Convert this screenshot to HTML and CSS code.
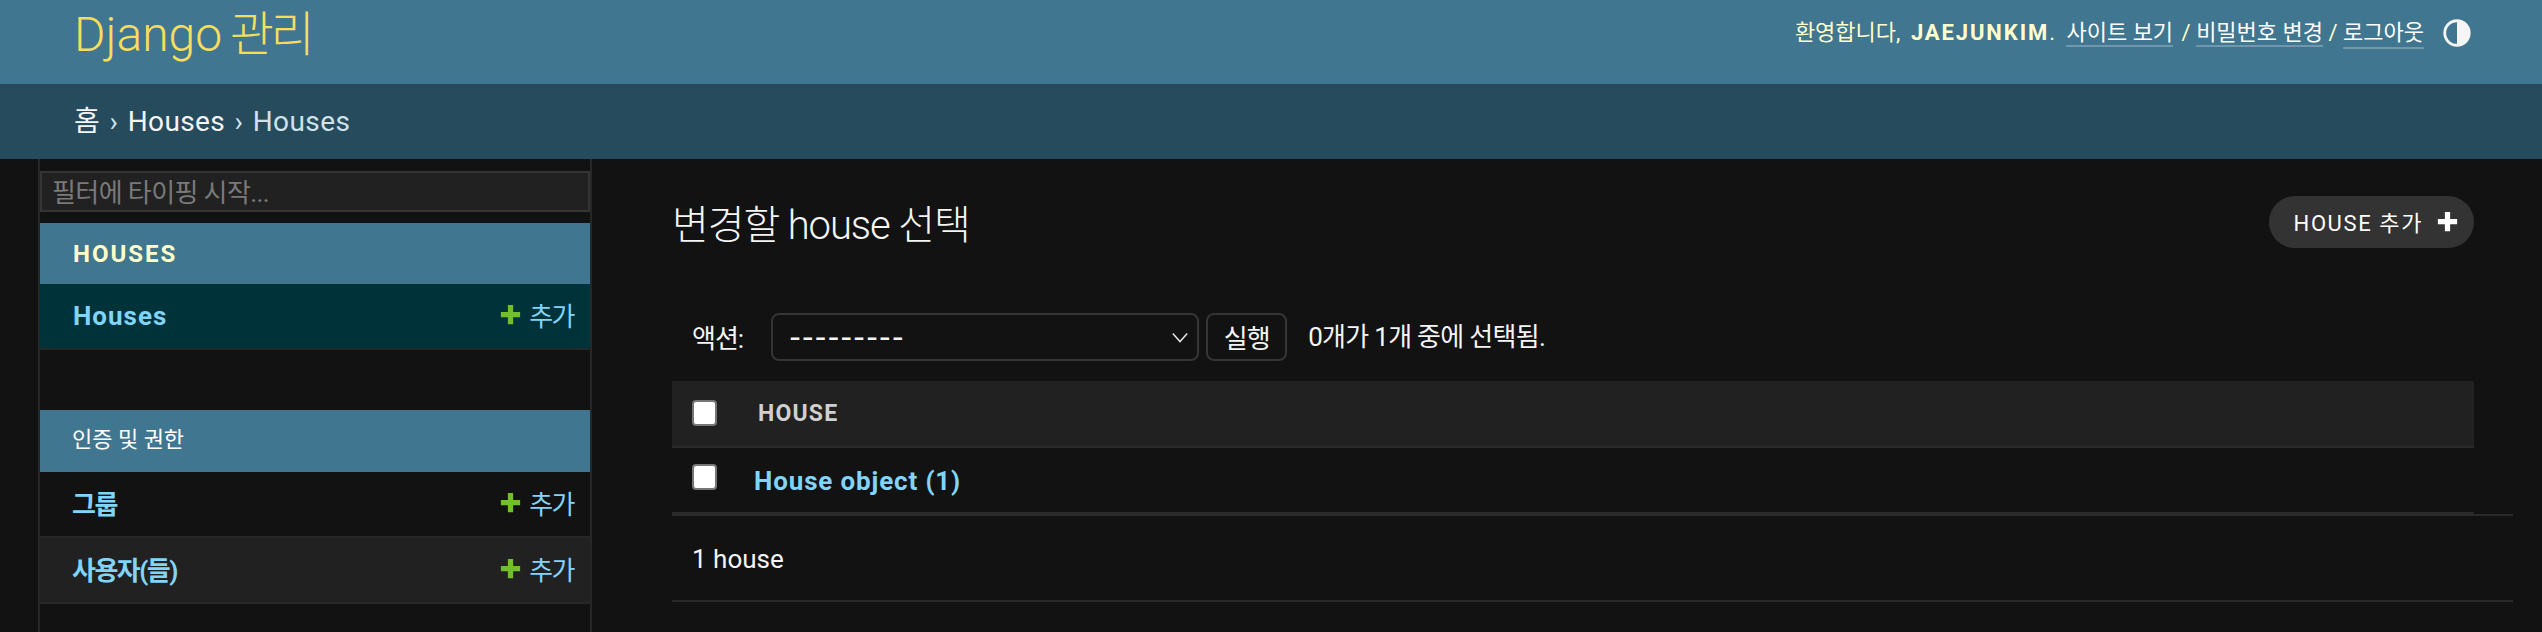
FILE: index.html
```html
<!DOCTYPE html>
<html lang="ko">
<head>
  <meta charset="UTF-8">
  <meta name="viewport" content="width=device-width, initial-scale=1.0">
  <title>변경할 house 선택 | Django 사이트 관리</title>
  <link rel="stylesheet" href="styles.css">
</head>
<body>
<header class="header">
  <div class="branding"><a href="#">Django <span class="branding-ko">관리</span></a></div>
  <div class="user-tools">
    <div class="user-links">환영합니다, <strong>JAEJUNKIM</strong>. <a class="view-site" href="#">사이트 보기</a> / <a href="#">비밀번호 변경</a> / <a class="logout" href="#">로그아웃</a></div>
    <svg class="theme-icon" viewBox="0 0 24 24" aria-hidden="true">
      <circle cx="12" cy="12" r="10.5" fill="none" stroke="#f5f5f5" stroke-width="2.4"/>
      <path d="M12 2a10 10 0 0 1 0 20z" fill="#f5f5f5"/>
    </svg>
  </div>
</header>
<div class="breadcrumbs"><a href="#">홈</a> › <a href="#">Houses</a> › Houses</div>

<div class="layout">
  <nav class="sidebar">
    <input class="nav-filter" type="search" placeholder="필터에 타이핑 시작...">

    <div class="app-caption app-caption-bold">HOUSES</div>
    <div class="model-row model-row-current">
      <a class="model-name model-name-latin" href="#">Houses</a>
      <a class="addlink" href="#"><svg viewBox="0 0 24 24"><path d="M9 1h6v8h8v6h-8v8H9v-8H1V9h8z"/></svg>추가</a>
    </div>

    <div class="app-caption">인증 및 권한</div>
    <div class="model-row">
      <a class="model-name" href="#">그룹</a>
      <a class="addlink" href="#"><svg viewBox="0 0 24 24"><path d="M9 1h6v8h8v6h-8v8H9v-8H1V9h8z"/></svg>추가</a>
    </div>
    <div class="model-row model-row-alt">
      <a class="model-name" href="#">사용자(들)</a>
      <a class="addlink" href="#"><svg viewBox="0 0 24 24"><path d="M9 1h6v8h8v6h-8v8H9v-8H1V9h8z"/></svg>추가</a>
    </div>
  </nav>

  <main class="content">
    <div class="title-row">
      <h1>변경할 house 선택</h1>
      <a class="add-button" href="#">HOUSE 추가<svg viewBox="0 0 24 24"><path d="M9 1h6v8h8v6h-8v8H9v-8H1V9h8z"/></svg></a>
    </div>

    <div class="actions">
      <label class="actions-label">액션:</label>
      <div class="select-box">
        <span class="select-value">---------</span>
        <svg viewBox="0 0 20 12"><path d="M2 1.5l8 9 8-9" fill="none" stroke="#e8e8e8" stroke-width="1.6"/></svg>
      </div>
      <button class="go-button">실행</button>
      <span class="action-counter">0개가 1개 중에 선택됨.</span>
    </div>

    <div class="table-head">
      <input class="check" type="checkbox">
      <span class="column-title">HOUSE</span>
    </div>
    <div class="table-row">
      <input class="check" type="checkbox">
      <a class="object-link" href="#">House object (1)</a>
    </div>
    <div class="paginator">1 house</div>
  </main>
</div>
</body>
</html>
```

FILE: styles.css
```css
html, body {
    height: 100%;
}

body {
    margin: 0;
    background-color: #121212;
    color: #f5f5f5;
    font-family: Roboto, "Noto Sans CJK KR", sans-serif;
    font-size: 28px;
    overflow: hidden;
}

a {
    text-decoration: none;
}

/* 상단 헤더 */
.header {
    height: 84px;
    display: flex;
    justify-content: space-between;
    background-color: #417690;
    color: #ffc;
    padding: 0 71px 0 74px;
}

.branding a {
    display: block;
    font-size: 48px;
    line-height: 70px;
    font-weight: 300;
    color: #f5dd5d;
    word-spacing: -4px;
}

.branding-ko {
    letter-spacing: -3.5px;
}

.user-tools {
    display: flex;
    align-items: flex-start;
    padding-top: 19px;
    font-size: 22px;
    line-height: 28px;
}

.user-links {
    white-space: pre;
}

.user-tools strong {
    margin-left: 5px;
    letter-spacing: 1.9px;
}

.user-tools a {
    color: #fff;
    border-bottom: 2px solid rgba(255, 255, 255, 0.25);
}

.user-tools a.view-site {
    margin: 0 3px 0 6px;
}

.user-tools a.logout {
    padding-bottom: 2px;
}

.theme-icon {
    width: 28px;
    height: 28px;
    margin-left: 19px;
}

.breadcrumbs {
    height: 75px;
    box-sizing: border-box;
    padding: 0 74px;
    background-color: #264b5d;
    color: #d0e2eb;
    line-height: 76px;
    letter-spacing: 0.4px;
    word-spacing: 2px;
}

.breadcrumbs a {
    color: #f5f5f5;
}

.layout {
    display: flex;
    height: calc(100% - 159px);
}

/* 왼쪽 사이드바 */
.sidebar {
    flex: none;
    width: 550px;
    margin-left: 38px;
    padding-top: 12px;
    border-left: 2px solid #272727;
    border-right: 2px solid #272727;
}

.nav-filter {
    display: block;
    width: 100%;
    height: 41px;
    box-sizing: border-box;
    margin: 0 0 11px;
    padding: 2px 10px 0;
    background-color: #212121;
    border: 2px solid #353535;
    border-radius: 0;
    color: #f5f5f5;
    font: inherit;
    font-size: 26px;
    letter-spacing: -0.6px;
}

.nav-filter::placeholder {
    color: #7a7a7a;
}

.app-caption {
    height: 62px;
    box-sizing: border-box;
    padding-left: 32px;
    background-color: #417690;
    color: #fff;
    font-size: 22px;
    line-height: 60px;
}

.app-caption-bold {
    height: 61px;
    padding-left: 33px;
    color: #ffc;
    font-size: 24px;
    font-weight: 700;
    letter-spacing: 2px;
    line-height: 62px;
}

.model-row {
    height: 66px;
    box-sizing: border-box;
    display: flex;
    justify-content: space-between;
    align-items: center;
    padding: 0 16px 4px 32px;
    border-bottom: 2px solid #272727;
    font-size: 26px;
    color: #79aec8;
}

.model-row-current {
    background-color: #003339;
    margin-bottom: 60px;
}

.model-row-alt {
    background-color: #212121;
}

.model-name {
    color: #81d4fa;
    font-weight: 700;
    letter-spacing: -1.5px;
}

.model-name-latin {
    padding: 3px 0 0 1px;
    letter-spacing: 1px;
}

.addlink {
    display: flex;
    align-items: center;
    gap: 8px;
    color: #81d4fa;
    letter-spacing: -1.5px;
}

.addlink svg {
    width: 21px;
    height: 21px;
    fill: #70bf2b;
}

/* 본문 */
.content {
    flex: 1;
    min-width: 0;
    padding: 0 29px 0 80px;
}

.title-row {
    display: flex;
    justify-content: space-between;
    align-items: center;
    margin-right: 39px;
    height: 126px;
}

.title-row h1 {
    margin: 0;
    font-size: 40px;
    font-weight: 300;
    letter-spacing: -1.1px;
}

.add-button {
    display: flex;
    align-items: center;
    gap: 14px;
    height: 52px;
    box-sizing: border-box;
    padding: 0 16px 2px 25px;
    border-radius: 26px;
    background-color: #333;
    color: #fff;
    font-size: 22px;
    letter-spacing: 1.6px;
}

.add-button svg {
    width: 21px;
    height: 21px;
    fill: #fff;
}

.actions {
    display: flex;
    align-items: center;
    height: 48px;
    margin-top: 28px;
    margin-bottom: 20px;
    padding-left: 20px;
    font-size: 26px;
}

.actions-label {
    margin: -2px 28px 0 0;
    letter-spacing: -1px;
}

.select-box {
    width: 428px;
    height: 48px;
    box-sizing: border-box;
    display: flex;
    justify-content: space-between;
    align-items: center;
    padding: 0 8px 0 16px;
    border: 2px solid #353535;
    border-radius: 8px;
}

.select-value {
    font-family: "DejaVu Sans", sans-serif;
    font-size: 32px;
    letter-spacing: 1.3px;
}

.select-box svg {
    width: 18px;
    height: 11px;
}

.go-button {
    width: 81px;
    height: 48px;
    margin: 0 21px 0 7px;
    padding: 0 0 2px;
    background-color: transparent;
    border: 2px solid #353535;
    border-radius: 8px;
    color: #f5f5f5;
    font: inherit;
    font-size: 26px;
    letter-spacing: -1px;
}

.action-counter {
    margin-top: -6px;
    letter-spacing: -0.7px;
}

.table-head, .table-row {
    display: flex;
    align-items: center;
    margin-right: 39px;
    padding-left: 20px;
}

.table-head {
    height: 65px;
    border-bottom: 2px solid #2a2a2a;
    background-color: #212121;
    color: #d0d0d0;
    font-size: 23px;
    font-weight: 700;
    letter-spacing: 1.2px;
}

.table-head .check {
    margin-bottom: 2px;
}

.table-row {
    height: 66px;
    box-sizing: border-box;
    border-bottom: 2px solid #2a2a2a;
    font-size: 26px;
}

.check {
    appearance: none;
    flex: none;
    width: 25px;
    height: 26px;
    margin: 0 41px 0 0;
    background-color: #fff;
    border: 2px solid #767676;
    border-radius: 4px;
}

.table-row .check {
    margin-right: 37px;
    margin-bottom: 6px;
}

.object-link {
    padding-top: 2px;
    color: #81d4fa;
    font-weight: 700;
    letter-spacing: 0.85px;
}

.paginator {
    height: 84px;
    padding-left: 20px;
    border-top: 2px solid #2a2a2a;
    border-bottom: 2px solid #2a2a2a;
    font-size: 26px;
    line-height: 86px;
}
```
